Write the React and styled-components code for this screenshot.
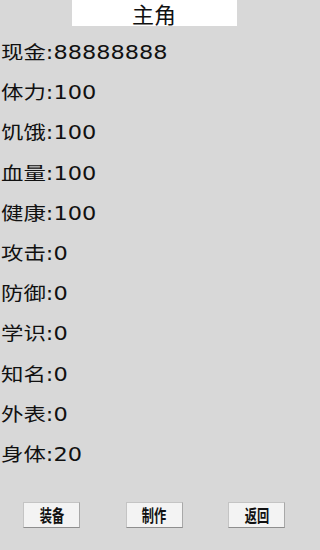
import React from "react";
import styled, { createGlobalStyle } from "styled-components";

const Global = createGlobalStyle`
  html, body { margin: 0; padding: 0; background: #d8d8d8; }
  #root { width: 308px; height: 550px; }
`;

const Screen = styled.div`
  width: 308px;
  height: 550px;
  background: #d8d8d8;
  display: flex;
  flex-direction: column;
  overflow: hidden;
  font-family: "DejaVu Sans", "Noto Sans CJK SC", sans-serif;
  color: #111;
`;

const Title = styled.div`
  align-self: center;
  width: 165px;
  height: 26px;
  background: #ffffff;
  display: flex;
  align-items: center;
  justify-content: center;
  font-family: "Noto Sans CJK SC", sans-serif;
  font-size: 22px;
  line-height: 22px;
  color: #111;
`;

const Stats = styled.div`
  display: flex;
  flex-direction: column;
  margin-top: 7px;
  padding-left: 1px;
`;

const Row = styled.div`
  height: 40.2px;
  display: flex;
  align-items: center;
  white-space: nowrap;
`;

const RowText = styled.span`
  display: inline-block;
  font-size: 18.7px;
  line-height: 22px;
  transform: scaleX(1.2);
  transform-origin: left center;
`;

const Buttons = styled.div`
  display: flex;
  justify-content: space-between;
  padding: 0 23px 0 23px;
  margin-top: 27px;
`;

const Button = styled.div`
  box-sizing: border-box;
  width: 57px;
  height: 26px;
  background: #f3f3f3;
  border: 1px solid #c4c4c4;
  border-bottom-color: #8e8e8e;
  border-right-color: #a8a8a8;
  display: flex;
  align-items: center;
  justify-content: center;
  overflow: hidden;
`;

const ButtonLabel = styled.span`
  display: inline-block;
  font-family: "Noto Sans CJK SC", sans-serif;
  font-weight: 700;
  font-size: 17px;
  line-height: 20px;
  color: #111;
  transform: scaleX(0.72);
`;

const stats = [
  ["现金", "88888888"],
  ["体力", "100"],
  ["饥饿", "100"],
  ["血量", "100"],
  ["健康", "100"],
  ["攻击", "0"],
  ["防御", "0"],
  ["学识", "0"],
  ["知名", "0"],
  ["外表", "0"],
  ["身体", "20"],
];

export default function App() {
  return (
    <>
      <Global />
      <Screen>
        <Title>主角</Title>
        <Stats>
          {stats.map(([k, v]) => (
            <Row key={k}>
              <RowText>
                {k}:{v}
              </RowText>
            </Row>
          ))}
        </Stats>
        <Buttons>
          <Button><ButtonLabel>装备</ButtonLabel></Button>
          <Button><ButtonLabel>制作</ButtonLabel></Button>
          <Button><ButtonLabel>返回</ButtonLabel></Button>
        </Buttons>
      </Screen>
    </>
  );
}
